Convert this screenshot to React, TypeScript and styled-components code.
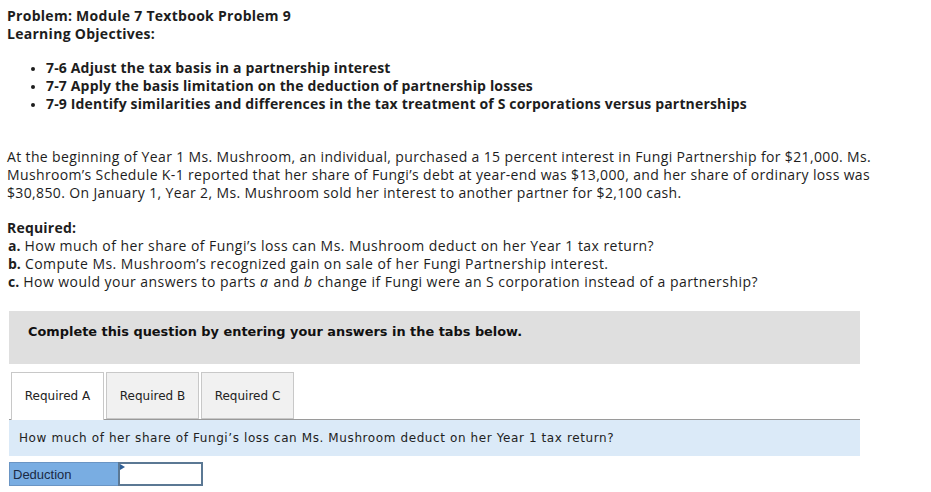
import React from "react";
import styled, { createGlobalStyle } from "styled-components";

const GlobalStyle = createGlobalStyle`
  html, body { margin: 0; padding: 0; background: #ffffff; }
  body { font-family: "Open Sans", "Lato", sans-serif; color: #1d1d1d; }
`;

const Page = styled.div`
  width: 931px;
  height: 492px;
  overflow: hidden;
  padding: 7px 0 0 7px;
  box-sizing: border-box;
`;

const Heading = styled.div`
  font-size: 14px;
  line-height: 18px;
  font-weight: 700;
  letter-spacing: 0.28px;
`;

const Objectives = styled.ul`
  margin: 16px 0 0 0;
  padding: 0 0 0 39px;
  font-size: 14px;
  line-height: 18px;
  font-weight: 700;
  letter-spacing: 0.16px;
  list-style: disc;
  li::marker { font-size: 12px; }
`;

const Para = styled.p`
  margin: 35px 0 0 0;
  font-size: 14px;
  line-height: 18px;
  letter-spacing: 0.36px;
  white-space: nowrap;
`;

const Required = styled.div`
  margin-top: 17px;
  font-size: 14px;
  line-height: 18px;
  letter-spacing: 0.45px;
`;

const ReqTitle = styled.div`
  font-weight: 700;
  letter-spacing: 0.2px;
`;

const ReqItem = styled.div`
  padding-left: 1px;
  b { font-weight: 700; letter-spacing: 0; }
  i { padding-right: 1px; }
`;

const Answer = styled.div`
  margin: 20px 0 0 2px;
  width: 851px;
  font-family: "DejaVu Sans", Verdana, sans-serif;
`;

const Instruction = styled.div`
  background: #dfdfdf;
  height: 53px;
  box-sizing: border-box;
  padding: 13px 0 0 19px;
  font-size: 12.9px;
  line-height: 16px;
  font-weight: 700;
  color: #111;
`;

const TabBar = styled.div`
  display: flex;
  align-items: flex-end;
  gap: 2px;
  margin-top: 8px;
  padding-left: 2px;
  border-bottom: 1px solid #9a9a9a;
  height: 47px;
`;

const Tab = styled.div<{ $active?: boolean }>`
  width: 93px;
  height: ${(p) => (p.$active ? 48 : 47)}px;
  margin-bottom: ${(p) => (p.$active ? -1 : 0)}px;
  box-sizing: border-box;
  display: flex;
  align-items: center;
  justify-content: center;
  font-size: 12px;
  color: #222;
  background: ${(p) => (p.$active ? "#ffffff" : "#f1f1f1")};
  border: 1px solid #c8c8c8;
  border-bottom: ${(p) => (p.$active ? "none" : "1px solid #c8c8c8")};
  padding-bottom: ${(p) => (p.$active ? 1 : 0)}px;
`;

const Question = styled.div`
  background: #dbeaf8;
  height: 36px;
  box-sizing: border-box;
  padding: 10px 0 0 10px;
  font-size: 12px;
  letter-spacing: 0.6px;
  line-height: 16px;
  color: #222;
`;

const EntryRow = styled.div`
  display: flex;
  margin-top: 6px;
  height: 24px;
`;

const EntryLabel = styled.div`
  width: 109px;
  background: #79ade2;
  box-sizing: border-box;
  padding: 4px 0 0 3px;
  font-family: "Liberation Sans", Arial, sans-serif;
  font-size: 13px;
  line-height: 16px;
  color: #1a2a44;
  border: 1px solid #6a95c4;
  border-right: none;
`;

const EntryInput = styled.div`
  position: relative;
  width: 85px;
  background: #ffffff;
  box-sizing: border-box;
  border: 2px solid #5b7894;
`;

const Marker = styled.div`
  position: absolute;
  left: 0;
  top: 0;
  width: 0;
  height: 0;
  border-top: 3px solid transparent;
  border-bottom: 3px solid transparent;
  border-left: 5px solid #2f5f96;
`;

export default function App() {
  return (
    <>
      <GlobalStyle />
      <Page>
        <Heading>
          Problem: Module 7 Textbook Problem 9
          <br />
          Learning Objectives:
        </Heading>
        <Objectives>
          <li>7-6 Adjust the tax basis in a partnership interest</li>
          <li>7-7 Apply the basis limitation on the deduction of partnership losses</li>
          <li>
            7-9 Identify similarities and differences in the tax treatment of S corporations versus
            partnerships
          </li>
        </Objectives>
        <Para>
          At the beginning of Year 1 Ms. Mushroom, an individual, purchased a 15 percent interest in
          Fungi Partnership for $21,000. Ms.
          <br />
          Mushroom’s Schedule K-1 reported that her share of Fungi’s debt at year-end was $13,000,
          and her share of ordinary loss was
          <br />
          $30,850. On January 1, Year 2, Ms. Mushroom sold her interest to another partner for
          $2,100 cash.
        </Para>
        <Required>
          <ReqTitle>Required:</ReqTitle>
          <ReqItem>
            <b>a.</b> How much of her share of Fungi’s loss can Ms. Mushroom deduct on her Year 1
            tax return?
          </ReqItem>
          <ReqItem>
            <b>b.</b> Compute Ms. Mushroom’s recognized gain on sale of her Fungi Partnership
            interest.
          </ReqItem>
          <ReqItem>
            <b>c.</b> How would your answers to parts <i>a</i> and <i>b</i> change if Fungi were an
            S corporation instead of a partnership?
          </ReqItem>
        </Required>
        <Answer>
          <Instruction>Complete this question by entering your answers in the tabs below.</Instruction>
          <TabBar>
            <Tab $active>Required A</Tab>
            <Tab>Required B</Tab>
            <Tab>Required C</Tab>
          </TabBar>
          <Question>
            How much of her share of Fungi’s loss can Ms. Mushroom deduct on her Year 1 tax return?
          </Question>
          <EntryRow>
            <EntryLabel>Deduction</EntryLabel>
            <EntryInput>
              <Marker />
            </EntryInput>
          </EntryRow>
        </Answer>
      </Page>
    </>
  );
}
